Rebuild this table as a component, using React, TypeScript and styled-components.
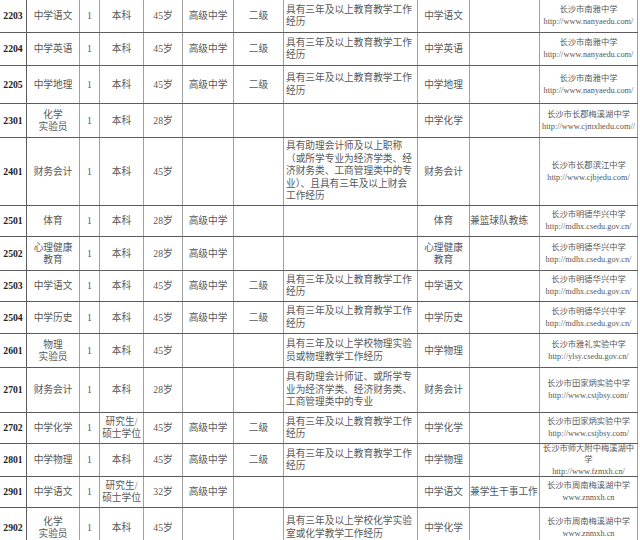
import React, { FC } from 'react'
import styled, { createGlobalStyle } from 'styled-components'

interface Job {
  code: string
  post: string[]
  num: string
  edu: string[]
  age: string
  school: string
  level: string
  req: string[]
  major: string[]
  note: string
  site: string[]
  height: number
}

const COLUMNS = [27, 53, 20, 44, 39, 51, 50, 134, 52, 70, 98]

const TEACH = ['具有三年及以上教育教学工作', '经历']
const NANYA = ['长沙市南雅中学', 'http://www.nanyaedu.com/']
const MDHX = ['长沙市明德华兴中学', 'http://mdhx.csedu.gov.cn/']
const TJB = ['长沙市田家炳实验中学', 'http://www.cstjbsy.com/']
const ZNMXH = ['长沙市周南梅溪湖中学', 'www.znmxh.cn']
const MASTER = ['研究生/', '硕士学位']

const jobs: Job[] = [
  { code: '2203', post: ['中学语文'], num: '1', edu: ['本科'], age: '45岁', school: '高级中学', level: '二级', req: TEACH, major: ['中学语文'], note: '', site: NANYA, height: 33 },
  { code: '2204', post: ['中学英语'], num: '1', edu: ['本科'], age: '45岁', school: '高级中学', level: '二级', req: TEACH, major: ['中学英语'], note: '', site: NANYA, height: 33 },
  { code: '2205', post: ['中学地理'], num: '1', edu: ['本科'], age: '45岁', school: '高级中学', level: '二级', req: TEACH, major: ['中学地理'], note: '', site: NANYA, height: 38 },
  { code: '2301', post: ['化学', '实验员'], num: '1', edu: ['本科'], age: '28岁', school: '', level: '', req: [], major: ['中学化学'], note: '', site: ['长沙市长郡梅溪湖中学', 'http://www.cjmxhedu.com//'], height: 34 },
  {
    code: '2401', post: ['财务会计'], num: '1', edu: ['本科'], age: '45岁', school: '', level: '',
    req: ['具有助理会计师及以上职称', '（或所学专业为经济学类、经', '济财务类、工商管理类中的专', '业）、且具有三年及以上财会', '工作经历'],
    major: ['财务会计'], note: '', site: ['长沙市长郡滨江中学', 'http://www.cjbjedu.com/'], height: 68,
  },
  { code: '2501', post: ['体育'], num: '1', edu: ['本科'], age: '28岁', school: '高级中学', level: '', req: [], major: ['体育'], note: '兼篮球队教练', site: MDHX, height: 31 },
  { code: '2502', post: ['心理健康', '教育'], num: '1', edu: ['本科'], age: '28岁', school: '高级中学', level: '', req: [], major: ['心理健康', '教育'], note: '', site: MDHX, height: 34 },
  { code: '2503', post: ['中学语文'], num: '1', edu: ['本科'], age: '45岁', school: '高级中学', level: '二级', req: TEACH, major: ['中学语文'], note: '', site: MDHX, height: 31 },
  { code: '2504', post: ['中学历史'], num: '1', edu: ['本科'], age: '45岁', school: '高级中学', level: '二级', req: TEACH, major: ['中学历史'], note: '', site: MDHX, height: 32 },
  {
    code: '2601', post: ['物理', '实验员'], num: '1', edu: ['本科'], age: '45岁', school: '', level: '',
    req: ['具有三年及以上学校物理实验', '员或物理教学工作经历'],
    major: ['中学物理'], note: '', site: ['长沙市雅礼实验中学', 'http://ylsy.csedu.gov.cn/'], height: 34,
  },
  {
    code: '2701', post: ['财务会计'], num: '1', edu: ['本科'], age: '28岁', school: '', level: '',
    req: ['具有助理会计师证、或所学专', '业为经济学类、经济财务类、', '工商管理类中的专业'],
    major: ['财务会计'], note: '', site: TJB, height: 45,
  },
  { code: '2702', post: ['中学化学'], num: '1', edu: MASTER, age: '45岁', school: '高级中学', level: '二级', req: TEACH, major: ['中学化学'], note: '', site: TJB, height: 31 },
  { code: '2801', post: ['中学物理'], num: '1', edu: ['本科'], age: '45岁', school: '高级中学', level: '二级', req: TEACH, major: ['中学物理'], note: '', site: ['长沙市师大附中梅溪湖中', '学', 'http://www.fzmxh.cn/'], height: 33 },
  { code: '2901', post: ['中学语文'], num: '1', edu: MASTER, age: '32岁', school: '高级中学', level: '', req: [], major: ['中学语文'], note: '兼学生干事工作', site: ZNMXH, height: 31 },
  {
    code: '2902', post: ['化学', '实验员'], num: '1', edu: ['本科'], age: '45岁', school: '', level: '',
    req: ['具有三年及以上学校化学实验', '室或化学教学工作经历'],
    major: ['中学化学'], note: '', site: ZNMXH, height: 40,
  },
]

const GlobalStyle = createGlobalStyle`
  html, body {
    margin: 0;
    padding: 0;
    background: #fff;
  }
  body {
    font-family: 'Liberation Serif', 'Noto Sans CJK SC', serif;
    color: #585858;
  }
`

const Sheet = styled.div`
  width: 638px;
  height: 540px;
  overflow: hidden;
`

const Row = styled.div<{ $h: number }>`
  display: grid;
  grid-template-columns: ${COLUMNS.map((w) => `${w}px`).join(' ')};
  height: ${(p) => p.$h}px;
  box-sizing: border-box;
  border-bottom: 1px solid #5c5c5c;
`

const Cell = styled.div`
  display: flex;
  align-items: center;
  justify-content: center;
  text-align: center;
  box-sizing: border-box;
  border-right: 1px solid #a0a0a0;
  padding: 0 1px;
  font-size: 9.7px;
  line-height: 12px;
  white-space: nowrap;
  overflow: hidden;
`

const CodeCell = styled(Cell)`
  font-weight: bold;
  color: #222;
  border-right-color: #5c5c5c;
`

const ReqCell = styled(Cell)`
  justify-content: flex-start;
  text-align: left;
  padding-left: 2px;
  line-height: 12.5px;
`

const NoteCell = styled(Cell)`
  justify-content: flex-start;
  text-align: left;
  padding-left: 0;
`

const SiteCell = styled(Cell)`
  font-size: 8.3px;
  line-height: 11.6px;
`

const Lines: FC<{ items: string[] }> = ({ items }) => (
  <span>
    {items.map((line, i) => (
      <React.Fragment key={i}>
        {i > 0 && <br />}
        {line}
      </React.Fragment>
    ))}
  </span>
)

const JobRow: FC<{ job: Job }> = ({ job }) => (
  <Row $h={job.height}>
    <CodeCell>{job.code}</CodeCell>
    <Cell><Lines items={job.post} /></Cell>
    <Cell>{job.num}</Cell>
    <Cell><Lines items={job.edu} /></Cell>
    <Cell>{job.age}</Cell>
    <Cell>{job.school}</Cell>
    <Cell>{job.level}</Cell>
    <ReqCell><Lines items={job.req} /></ReqCell>
    <Cell><Lines items={job.major} /></Cell>
    <NoteCell>{job.note}</NoteCell>
    <SiteCell><Lines items={job.site} /></SiteCell>
  </Row>
)

const App: FC = () => (
  <>
    <GlobalStyle />
    <Sheet>
      {jobs.map((job) => (
        <JobRow key={job.code} job={job} />
      ))}
    </Sheet>
  </>
)

export default App
